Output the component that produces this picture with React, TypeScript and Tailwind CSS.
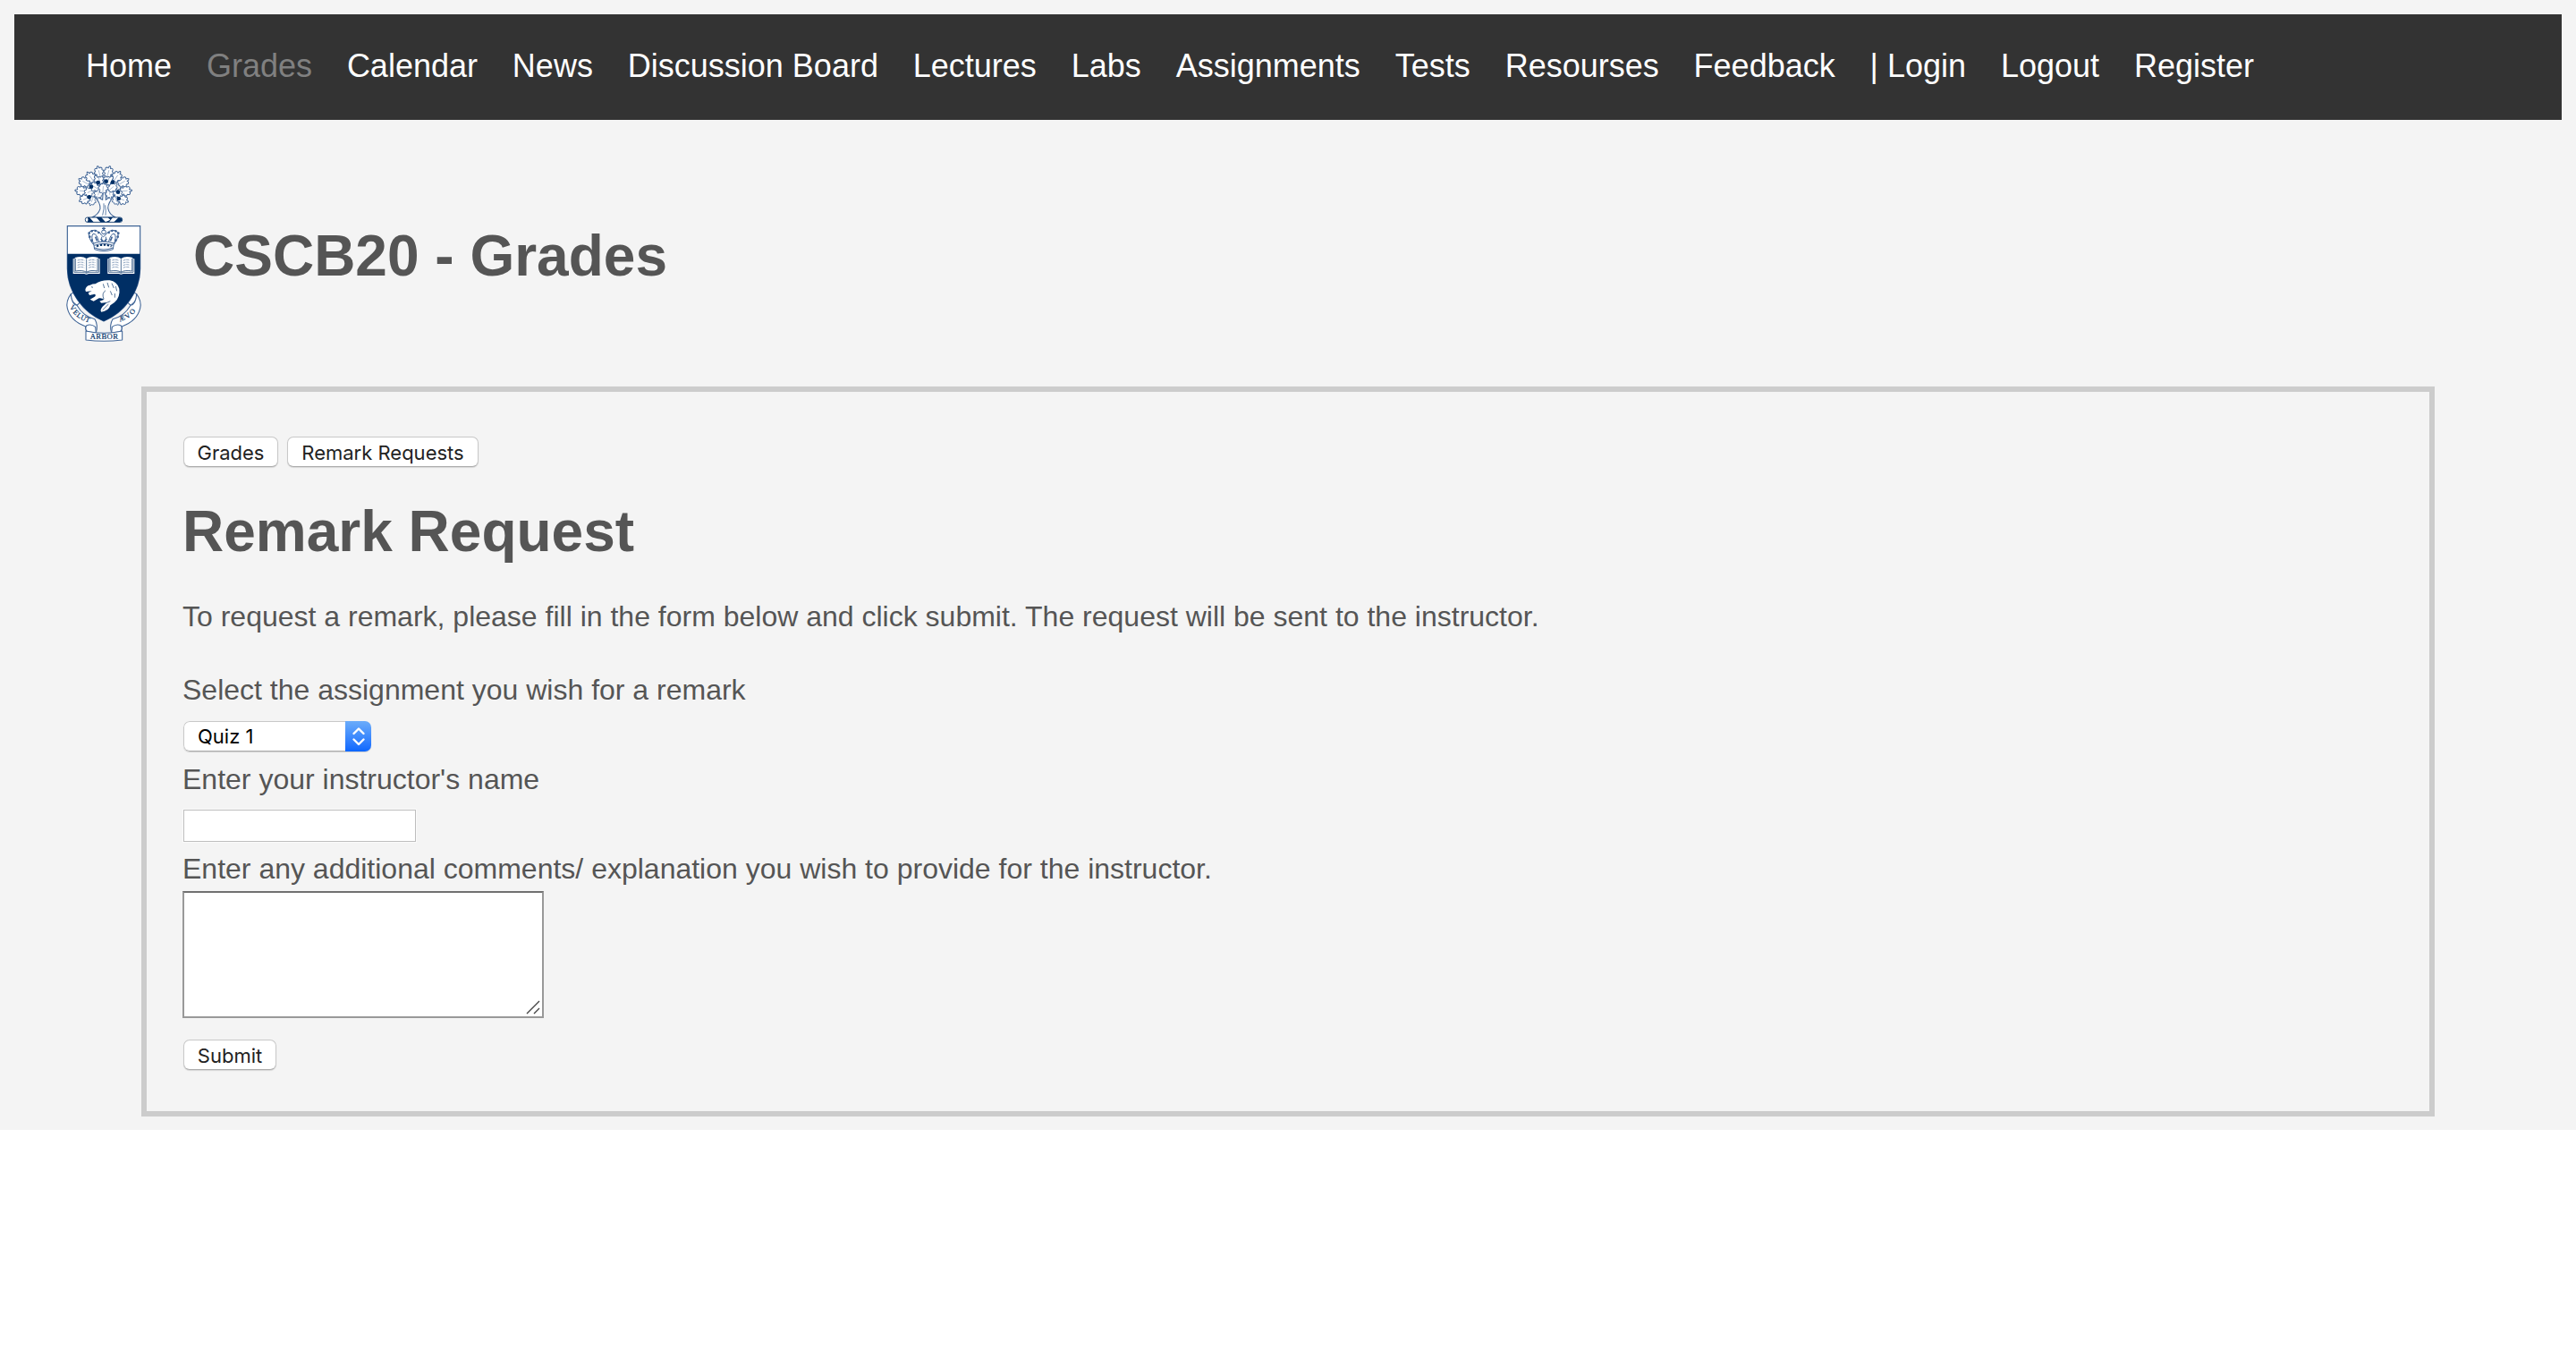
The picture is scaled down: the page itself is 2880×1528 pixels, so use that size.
import React from "react";

const NAVY = "#002f65";
const LINE = "#3f6496";

const LEAVES: [number, number, number, number][] = [
  [128, 164, 200, 0.8], [210, 162, 160, 0.8], [104, 158, 250, 0.95], [232, 160, 110, 0.95],
  [150, 140, 190, 0.85], [188, 140, 170, 0.85], [92, 130, 275, 1], [242, 130, 85, 1],
  [118, 134, 240, 0.9], [216, 138, 120, 0.85], [136, 116, 300, 0.9], [198, 118, 50, 0.9],
  [166, 120, 5, 0.95], [102, 100, 300, 1], [234, 100, 60, 1], [124, 84, 325, 1],
  [212, 82, 35, 1], [152, 90, 345, 1], [184, 92, 20, 1], [152, 66, 345, 0.95], [184, 66, 15, 0.95],
];

const ACORNS: [number, number][] = [
  [149, 102], [176, 98], [198, 101], [126, 116], [216, 134], [119, 151], [218, 156],
];

function Book({ x }: { x: number }) {
  return (
    <g transform={`translate(${x} 350)`}>
      <path d="M0 8H6V4Q30 -4 45 7Q60 -4 84 4V8H90V58H52Q45 63 38 58H0Z" fill="#fff" />
      <path d="M4 9V53H38Q45 59 52 53H86V9M8 7V49Q32 44 45 53Q58 44 82 49V7M45 8V53" fill="none" stroke={NAVY} strokeWidth="2" />
      <path d="M15 13Q28 9 38 14M15 21Q28 17 38 22M15 29Q28 25 38 30M15 37Q28 33 38 38M52 14Q62 9 75 13M52 22Q62 17 75 21M52 30Q62 25 75 29M52 38Q62 33 75 37" fill="none" stroke={LINE} strokeWidth="1.8" strokeDasharray="9 2" />
    </g>
  );
}

function Crest() {
  return (
    <svg viewBox="0 0 330 660" className="h-[220px] w-[110px] shrink-0" role="img" aria-label="University crest">
      {/* tree */}
      <path d="M128 219Q150 210 156 190Q158 170 136 148L144 144Q158 158 164 160L166 130H174L175 160Q188 154 196 140L204 146Q182 170 182 188Q186 210 208 219Z" fill="#fff" stroke={LINE} strokeWidth="3.2" />
      <path d="M164 212Q170 190 168 172M174 212Q176 196 173 178" fill="none" stroke={LINE} strokeWidth="2.4" />
      {LEAVES.map(([x, y, r, s], i) => (
        <g key={i} transform={`translate(${x} ${y}) rotate(${r}) scale(${s})`}>
          <path d="M0 20Q-4 15 -10 18Q-13 12 -10 8Q-17 6 -18 -1Q-13 -2 -12 -5Q-16 -12 -9 -14Q-5 -14 -4 -12Q-4 -19 0 -21Q4 -19 4 -12Q5 -14 9 -14Q16 -12 12 -5Q13 -2 18 -1Q17 6 10 8Q13 12 10 18Q4 15 0 20Z" fill="#fff" stroke={LINE} strokeWidth="3" strokeLinejoin="round" />
          <path d="M0 17V-6" stroke={LINE} strokeWidth="1.3" />
        </g>
      ))}
      {ACORNS.map(([x, y], i) => (
        <circle key={i} cx={x} cy={y} r="7" fill={NAVY} />
      ))}
      {/* torse */}
      <rect x="106" y="219" width="124" height="16" rx="7" fill="#fff" stroke={NAVY} strokeWidth="2.5" />
      <path d="M114 219H120L134 235H112Q118 227 114 219ZM143 219H160L174 235H157ZM182 219H198L186 235H174L190 227ZM218 219Q232 221 229 230L222 235H202Z" fill={NAVY} />

      {/* motto scroll */}
      <g fill="#fff" stroke={LINE} strokeWidth="3.2" strokeLinejoin="round">
        <path d="M58 476Q70 466 84 484L92 500L78 514L66 504Q56 490 58 476Z" />
        <path d="M278 476Q266 466 252 484L244 500L258 514L270 504Q280 490 278 476Z" />
        <path d="M58 476Q40 500 46 524Q56 566 106 584Q108 594 110 602L142 606Q150 580 138 560Q100 552 78 514Q60 510 58 476Z" />
        <path d="M278 476Q296 500 290 524Q280 566 230 584Q228 594 226 602L194 606Q186 580 198 560Q236 552 258 514Q276 510 278 476Z" />
        <path d="M142 606L140 586Q124 574 110 582Q104 592 112 602Z" />
        <path d="M194 606L196 586Q212 574 226 582Q232 592 224 602Z" />
        <path d="M108 600Q168 614 230 600V630Q168 638 108 630Z" />
      </g>
      <g fill={NAVY} stroke={NAVY} strokeWidth="0.5" fontFamily="Liberation Serif, serif" fontSize="24" textAnchor="middle">
        <text x="169" y="628" fontSize="26" textLength="94">ARBOR</text>
        <text transform="translate(58 527) rotate(52)">V</text>
        <text transform="translate(69 543) rotate(45)">E</text>
        <text transform="translate(82 554) rotate(36)">L</text>
        <text transform="translate(96 563) rotate(26)">U</text>
        <text transform="translate(112 569) rotate(18)">T</text>
        <text transform="translate(232 565) rotate(-24)">Æ</text>
        <text transform="translate(253 555) rotate(-38)">V</text>
        <text transform="translate(270 540) rotate(-52)">O</text>
      </g>

      {/* shield */}
      <path d="M46 248H290V390C290 470 236 538 168 567C100 538 46 470 46 390Z" fill="#fff" stroke={LINE} strokeWidth="3.5" />
      <path d="M46 341H290V390C290 470 236 538 168 567C100 538 46 470 46 390Z" fill={NAVY} />

      {/* crown */}
      <g fill="#fff" stroke={LINE} strokeWidth="3">
        <path d="M133 310Q112 282 120 268Q136 254 156 272Q160 280 166 284Q174 280 178 272Q198 254 214 268Q222 282 202 310Z" />
        <path d="M134 308Q124 284 132 274Q146 272 152 304M202 308Q212 284 204 274Q190 272 184 304" />
        <path d="M161 284V302M175 284V302" />
        <circle cx="168" cy="268" r="7" />
        <path d="M168 251V263M162 256H174" strokeWidth="4" />
        <path d="M140 284L146 298M196 284L190 298M158 290L168 302L178 290" strokeWidth="5" />
        <path d="M134 306Q168 294 202 306L199 326Q168 338 137 326Z" />
        <path d="M136 313Q168 301 200 313M138 321Q168 333 198 321" />
      </g>
      <path d="M144 316Q168 306 194 316" fill="none" stroke={NAVY} strokeWidth="6" strokeDasharray="7 5" />
      <g fill={LINE}>
        <circle cx="119" cy="272" r="4" /><circle cx="121" cy="284" r="4" /><circle cx="128" cy="296" r="4" />
        <circle cx="217" cy="272" r="4" /><circle cx="215" cy="284" r="4" /><circle cx="208" cy="296" r="4" />
        <circle cx="128" cy="265" r="4" /><circle cx="140" cy="264" r="4" /><circle cx="151" cy="270" r="4" />
        <circle cx="208" cy="265" r="4" /><circle cx="196" cy="264" r="4" /><circle cx="185" cy="270" r="4" />
      </g>

      <Book x={65} />
      <Book x={181} />

      {/* beaver */}
      <path d="M106 462Q108 448 122 446Q130 442 140 442Q160 428 188 430Q212 434 220 458Q224 486 204 504L190 514Q184 534 160 536Q154 530 164 518Q174 510 178 504L160 506L154 500L170 494Q160 488 152 490L134 500L122 494L136 486Q144 480 138 476L120 480L116 472L128 466L108 468Z" fill="#fff" />
      <path d="M166 442L170 456M180 438L185 454M195 440L202 456M208 450L212 466M190 466L196 480M205 474V488M174 464Q160 474 168 492M184 510L164 530M190 500L176 506M126 452L132 454" fill="none" stroke={NAVY} strokeWidth="2" />
    </svg>
  );
}

const NAV = ["Home", "Grades", "Calendar", "News", "Discussion Board", "Lectures", "Labs", "Assignments", "Tests", "Resourses", "Feedback", "| Login", "Logout", "Register"];

function PushButton({ children, className }: { children: React.ReactNode; className: string }) {
  return (
    <button
      className={`flex h-[34px] items-center justify-center whitespace-nowrap rounded-[7px] border border-[#c8c8c8] border-b-[#acacac] bg-white pt-[2px] font-[Inter,sans-serif] text-[22px] leading-none text-[#222] shadow-[0_1px_1px_rgba(0,0,0,0.12)] ${className}`}
    >
      {children}
    </button>
  );
}

export default function App() {
  return (
    <div className="h-[1528px] bg-white font-['Liberation_Sans',Arial,sans-serif] text-[32px] leading-[40px] text-[#555]">
      <div className="h-[1263px] bg-[#f4f4f4] p-4">
        <nav className="h-[118px] bg-[#333] pl-20 pt-[37px]">
          <ul className="flex gap-[38.9px] whitespace-nowrap text-[36px] leading-[41px] text-white">
            {NAV.map((n) => (
              <li key={n} className={n === "Grades" ? "text-[#808080]" : ""}>
                <a>{n}</a>
              </li>
            ))}
          </ul>
        </nav>

        <header className="ml-11 mt-9 flex h-[262px]">
          <Crest />
          <h1 className="ml-[46px] mt-[79px] text-[64px] font-bold leading-[74px]">CSCB20 - Grades</h1>
        </header>

        <main className="ml-[142px] flex h-[816px] w-[2564px] flex-col items-start border-6 border-[#ccc] pl-10 pt-[50px]">
          <div className="flex gap-[10px]">
            <PushButton className="ml-px w-[106px]">Grades</PushButton>
            <PushButton className="w-[214px]">Remark Requests</PushButton>
          </div>
          <h2 className="mt-[35px] text-[64px] font-bold leading-[74px]">Remark Request</h2>
          <p className="mt-[38px]">
            To request a remark, please fill in the form below and click submit. The request will be sent to the instructor.
          </p>
          <label className="mt-[42px]">Select the assignment you wish for a remark</label>
          <div className="ml-px mt-[15px] flex h-[34px] w-[210px] overflow-hidden rounded-[7px] shadow-[0_1px_1px_rgba(0,0,0,0.15)]">
            <span className="flex flex-1 items-center rounded-l-[7px] border border-r-0 border-[#c8c8c8] border-b-[#acacac] bg-white pl-[15px] font-[Inter,sans-serif] text-[22px] leading-none text-black">
              Quiz 1
            </span>
            <span className="flex w-[29px] items-center justify-center bg-linear-to-b from-[#6bacfa] to-[#0a66fe]">
              <svg viewBox="0 0 16 22" className="h-[22px] w-4" fill="none" stroke="#fff" strokeWidth="2.4" strokeLinecap="round" strokeLinejoin="round">
                <path d="M2.500 8L8 2.500L13.500 8M2.500 14.500L8 20L13.500 14.500" />
              </svg>
            </span>
          </div>
          <label className="mt-[11px]">Enter your instructor's name</label>
          <input className="ml-px mt-[14px] h-[36px] w-[260px] border border-[#bebebe] bg-white shadow-[0_0_0_1px_#fafafa]" />
          <label className="mt-[10px]">Enter any additional comments/ explanation you wish to provide for the instructor.</label>
          <div className="mt-[5px] flex h-[142px] w-[404px] items-end justify-end border-2 border-[#999] border-t-[#707070] bg-white p-[2px]">
            <svg viewBox="0 0 16 16" className="h-4 w-4" stroke="#444" strokeWidth="1.4">
              <path d="M1 15L15 1M9 15L15 9" />
            </svg>
          </div>
          <PushButton className="ml-px mt-6 w-[104px]">Submit</PushButton>
        </main>
      </div>
    </div>
  );
}
